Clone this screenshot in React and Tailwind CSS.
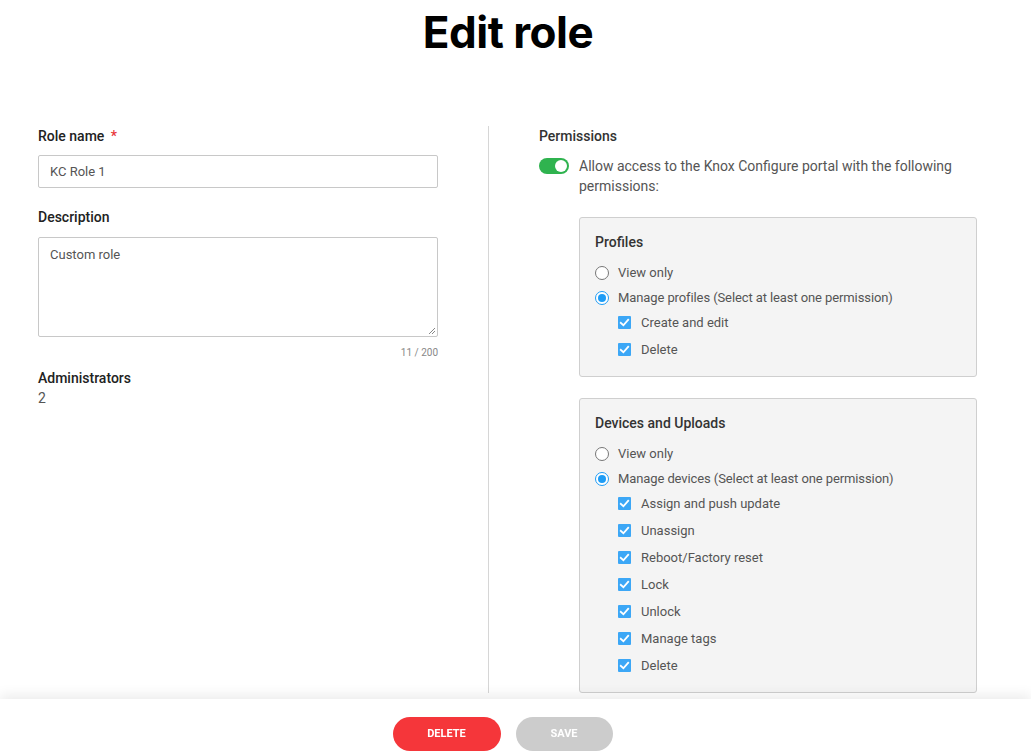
import React from 'react';

const Radio = ({ checked }) => (
  <span
    className={
      'flex h-[14px] w-[14px] shrink-0 items-center justify-center rounded-full border bg-white ' +
      (checked ? 'border-[#1e9cf5]' : 'border-[#767676]')
    }
  >
    {checked && <span className="h-[8px] w-[8px] rounded-full bg-[#1e9cf5]" />}
  </span>
);

const Check = () => (
  <span className="flex h-[13px] w-[13px] shrink-0 items-center justify-center rounded-[1px] bg-[#3ca7f6]">
    <svg width="11" height="11" viewBox="0 0 12 12" fill="none">
      <path d="M2 6.4 L4.8 9 L10 3" stroke="white" strokeWidth="2" strokeLinecap="square" />
    </svg>
  </span>
);

const PermissionBox = ({ title, manageLabel, items }) => (
  <div className="rounded-[3px] border border-[#cfcfcf] bg-[#f4f4f4] px-[15px] pt-[14px] pb-[13px]">
    <div className="text-[14px] leading-[20px] font-medium text-[#333]">{title}</div>
    <div className="mt-[8px]">
      <div className="flex h-[25px] items-center gap-[9px]">
        <Radio />
        <span className="text-[13px] text-[#555]">View only</span>
      </div>
      <div className="flex h-[25px] items-center gap-[9px]">
        <Radio checked />
        <span className="text-[13px] tracking-[-0.1px] text-[#555]">{manageLabel}</span>
      </div>
      <div className="-mt-[1px] pl-[23px]">
        {items.map((item) => (
          <div key={item} className="flex h-[27px] items-center gap-[10px]">
            <Check />
            <span className="text-[13px] text-[#555]">{item}</span>
          </div>
        ))}
      </div>
    </div>
  </div>
);

const App = () => {
  return (
    <div className="min-h-screen bg-white font-['Roboto',sans-serif]">
      <div className="flex justify-center pt-[4px] pr-[15px]">
        <h1 className="text-[44px] leading-[56px] font-bold tracking-[-0.5px] text-black font-['Inter',sans-serif]">
          Edit role
        </h1>
      </div>

      <div className="mt-[66px] flex pb-[80px]">
        <div className="w-[489px] border-r border-[#d6d6d6] pl-[38px] pr-[50px]">
          <div className="text-[14px] leading-[20px] font-medium text-[#222]">
            Role name <span className="ml-[3px] text-[#e8363a]">*</span>
          </div>
          <div className="mt-[9px] flex h-[33px] w-[400px] items-center rounded-[2px] border border-[#c8c8c8] px-[11px] text-[13px] text-[#555]">
            KC Role 1
          </div>

          <div className="mt-[19px] text-[14px] leading-[20px] font-medium text-[#222]">Description</div>
          <div className="relative mt-[10px] h-[100px] w-[400px] rounded-[2px] border border-[#c8c8c8] px-[11px] pt-[7px] text-[13px] text-[#555]">
            Custom role
            <svg className="absolute right-[1px] bottom-[1px]" width="8" height="8" viewBox="0 0 8 8">
              <path d="M7 1 L1 7 M7 4 L4 7" stroke="#888" strokeWidth="1" />
            </svg>
          </div>
          <div className="mt-[8px] w-[400px] text-right text-[10px] leading-[15px] text-[#888]">11 / 200</div>

          <div className="mt-[8px] text-[14px] leading-[20px] font-medium text-[#222]">Administrators</div>
          <div className="text-[14px] leading-[20px] text-[#555]">2</div>
        </div>

        <div className="pl-[50px]">
          <div className="text-[14px] leading-[20px] font-medium text-[#333]">Permissions</div>
          <div className="mt-[10px] flex items-start gap-[10px]">
            <span className="mt-[2px] flex h-[16px] w-[30px] shrink-0 items-center justify-end rounded-full bg-[#2fb34f] pr-[2px]">
              <span className="h-[12px] w-[12px] rounded-full bg-white" />
            </span>
            <p className="w-[390px] text-[14px] leading-[20px] text-[#555]">
              Allow access to the Knox Configure portal with the following permissions:
            </p>
          </div>

          <div className="mt-[21px] ml-[40px] flex w-[398px] flex-col gap-[21px]">
            <PermissionBox
              title="Profiles"
              manageLabel="Manage profiles (Select at least one permission)"
              items={['Create and edit', 'Delete']}
            />
            <PermissionBox
              title="Devices and Uploads"
              manageLabel="Manage devices (Select at least one permission)"
              items={[
                'Assign and push update',
                'Unassign',
                'Reboot/Factory reset',
                'Lock',
                'Unlock',
                'Manage tags',
                'Delete',
              ]}
            />
          </div>
        </div>
      </div>

      <div className="fixed right-0 bottom-0 left-0 flex h-[57px] items-start justify-center gap-[15px] bg-white pt-[18px] pr-[26px] shadow-[0_-4px_12px_rgba(0,0,0,0.08)]">
        <button
          type="button"
          className="h-[34px] w-[108px] rounded-full bg-[#f5363a] text-[11px] font-bold text-white"
        >
          DELETE
        </button>
        <button
          type="button"
          disabled
          className="h-[34px] w-[97px] rounded-full bg-[#cccccc] text-[11px] font-bold text-white"
        >
          SAVE
        </button>
      </div>
    </div>
  );
};

export default App;
